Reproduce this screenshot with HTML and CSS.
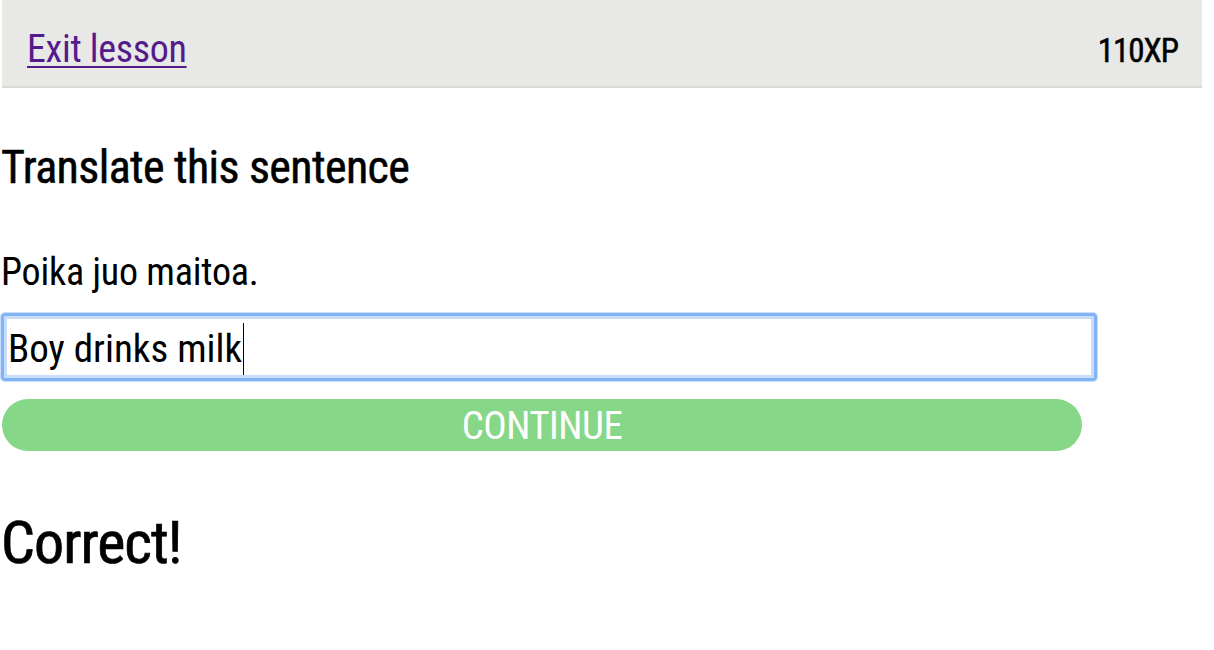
FILE: index.html
```html
<!DOCTYPE html>
<html lang="en">
<head>
<meta charset="utf-8">
<title>Lesson</title>
<link rel="stylesheet" href="styles.css">
</head>
<body>
<header class="topbar">
  <a class="exit" href="#">Exit lesson</a>
  <span class="xp">110XP</span>
</header>
<main class="lesson">
  <h2 class="task">Translate this sentence</h2>
  <p class="source">Poika juo maitoa.</p>
  <div class="answer"><span class="answer-text">Boy drinks milk</span><span class="caret"></span></div>
  <button class="continue" type="button">Continue</button>
  <h1 class="result">Correct!</h1>
</main>
</body>
</html>
```

FILE: styles.css
```css
html, body {
  margin: 0;
  padding: 0;
  background: #ffffff;
}
body {
  font-family: "Roboto Condensed", "Liberation Sans Narrow", "DejaVu Sans Condensed", "Open Sans", sans-serif;
  color: #000;
}
.topbar {
  margin-left: 2px;
  width: 1200px;
  height: 88px;
  box-sizing: border-box;
  background: #e8e8e6;
  border-bottom: 2px solid #d9d9d7;
  display: flex;
  align-items: baseline;
  justify-content: space-between;
  padding: 30px 24px 0 25px;
}
.exit {
  color: #551a8b;
  font-size: 38px;
  line-height: 39px;
  letter-spacing: -0.3px;
  text-decoration: underline;
  text-decoration-thickness: 2px;
  text-underline-offset: 4px;
}
.xp {
  font-size: 33px;
  line-height: 37px;
  font-weight: 400;
  letter-spacing: -1px;
  -webkit-text-stroke: 0.5px #000;
}
.lesson {
  padding-left: 1px;
}
.task {
  margin: 51px 0 0;
  font-size: 46px;
  font-weight: 400;
  line-height: 56px;
  letter-spacing: -0.6px;
  -webkit-text-stroke: 0.5px #000;
}
.source {
  margin: 54px 0 0;
  font-size: 38px;
  line-height: 46px;
  letter-spacing: -0.2px;
}
.answer {
  box-sizing: border-box;
  width: 1096px;
  height: 68px;
  margin-top: 18px;
  border: 3px solid #80b4f5;
  border-radius: 4px;
  box-shadow: 0 0 0 1px #c9defb, inset 0 0 0 3px #c8ddfa;
  display: flex;
  align-items: center;
  padding: 4px 0 0 4px;
  font-size: 39px;
}
.answer-text {
  line-height: 58px;
}
.caret {
  display: inline-block;
  width: 1px;
  height: 52px;
  background: #000;
  margin-left: 1px;
}
.continue {
  display: block;
  margin: 18px 0 0 1px;
  width: 1080px;
  height: 52px;
  border: 0;
  border-radius: 26px;
  background: #87d788;
  color: #fff;
  font-family: inherit;
  font-size: 39px;
  line-height: 50px;
  font-weight: 400;
  letter-spacing: -0.5px;
  text-transform: uppercase;
  padding: 2px 0 0;
}
.result {
  margin: 57px 0 0;
  font-size: 60px;
  font-weight: 400;
  line-height: 70px;
  letter-spacing: -1px;
  -webkit-text-stroke: 0.7px #000;
}
```
